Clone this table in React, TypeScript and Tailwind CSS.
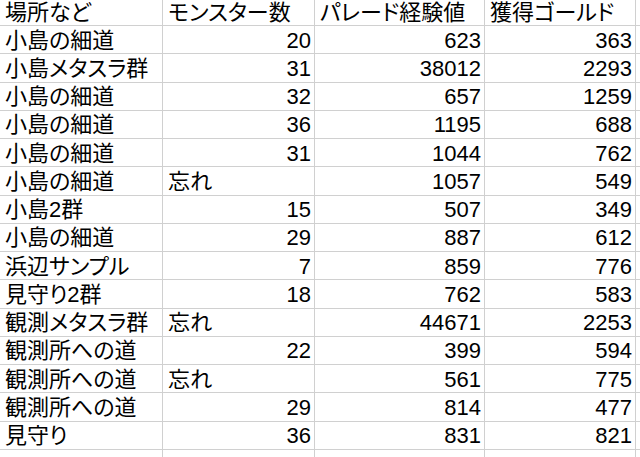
import React from 'react';

// One row of the sheet: place, monster count (or a note), exp, gold
interface Row {
  place: string;
  count: string;
  exp: string;
  gold: string;
}

const rows: Row[] = [
  { place: '小島の細道', count: '20', exp: '623', gold: '363' },
  { place: '小島メタスラ群', count: '31', exp: '38012', gold: '2293' },
  { place: '小島の細道', count: '32', exp: '657', gold: '1259' },
  { place: '小島の細道', count: '36', exp: '1195', gold: '688' },
  { place: '小島の細道', count: '31', exp: '1044', gold: '762' },
  { place: '小島の細道', count: '忘れ', exp: '1057', gold: '549' },
  { place: '小島2群', count: '15', exp: '507', gold: '349' },
  { place: '小島の細道', count: '29', exp: '887', gold: '612' },
  { place: '浜辺サンプル', count: '7', exp: '859', gold: '776' },
  { place: '見守り2群', count: '18', exp: '762', gold: '583' },
  { place: '観測メタスラ群', count: '忘れ', exp: '44671', gold: '2253' },
  { place: '観測所への道', count: '22', exp: '399', gold: '594' },
  { place: '観測所への道', count: '忘れ', exp: '561', gold: '775' },
  { place: '観測所への道', count: '29', exp: '814', gold: '477' },
  { place: '見守り', count: '36', exp: '831', gold: '821' },
];

const isNumber = (s: string) => /^\d+$/.test(s);

const Cell = ({ text, right, tall }: { text: string; right?: boolean; tall?: boolean }) => (
  <div
    className={`flex items-center overflow-hidden whitespace-nowrap border-r border-b border-[#d0d0d0] ${
      tall ? 'h-[28.25px]' : 'h-[26px]'
    } ${right ? 'justify-end pr-[3px]' : 'justify-start pl-[5px]'}`}
  >
    <span className={`leading-none ${tall ? 'pt-[2px]' : 'pt-0'}`}>{text}</span>
  </div>
);

const App = () => {
  return (
    <div
      className="w-[640px] h-[457px] overflow-hidden bg-white text-black text-[22px] [font-feature-settings:'palt']"
      style={{ fontFamily: '"Liberation Sans", "Noto Sans CJK JP", sans-serif' }}
    >
      <div className="grid grid-cols-[163px_152px_170px_151px_1fr]">
        <Cell text="場所など" />
        <Cell text="モンスター数" />
        <Cell text="パレード経験値" />
        <Cell text="獲得ゴールド" />
        <Cell text="" />

        {rows.map((r, i) => (
          <React.Fragment key={i}>
            <Cell text={r.place} tall />
            <Cell text={r.count} right={isNumber(r.count)} tall />
            <Cell text={r.exp} right tall />
            <Cell text={r.gold} right tall />
            <Cell text="" tall />
          </React.Fragment>
        ))}

        {/* partial row at the bottom edge */}
        {[0, 1, 2, 3, 4].map((k) => (
          <Cell key={`e${k}`} text="" tall />
        ))}
      </div>
    </div>
  );
};

export default App;
